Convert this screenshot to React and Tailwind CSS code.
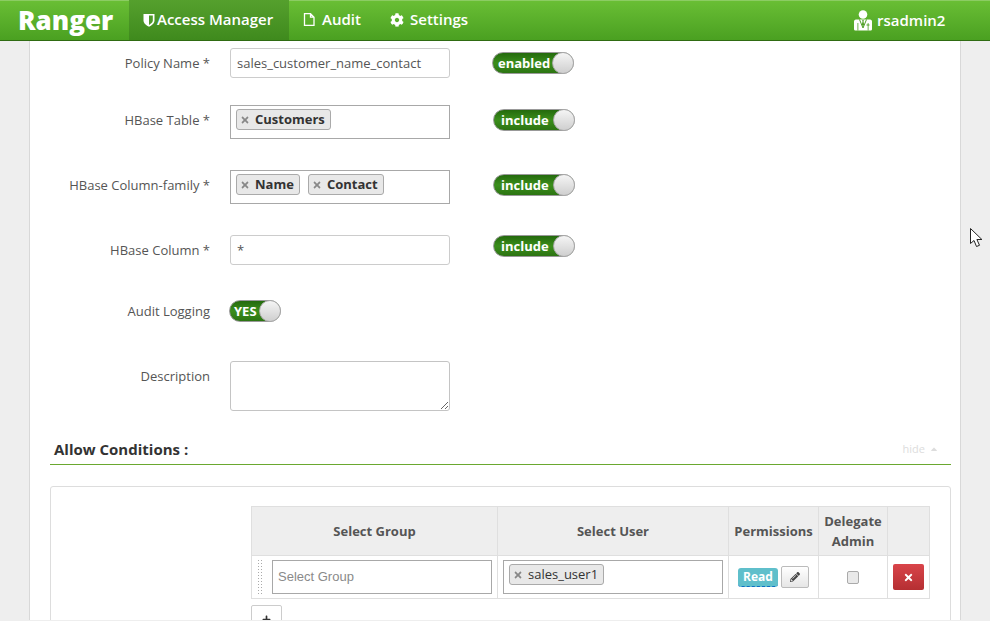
import React from "react";
import { FaCog, FaPencilAlt, FaTimes, FaPlus, FaCaretUp } from "react-icons/fa";

function Shield() {
  return (
    <svg width="12" height="14" viewBox="0 0 12 14" className="mr-[2px]">
      <path d="M0.500 1h11v6.500c0 3-3 5-5.500 6.200C3.500 12.500 0.500 10.500 0.500 7.500z" fill="#fff" />
      <path d="M6 2.600h3.800v5c0 2-2 3.400-3.800 4.400z" fill="#4d9a28" />
    </svg>
  );
}

function FileIcon() {
  return (
    <svg width="12" height="13" viewBox="0 0 12 13" className="mr-[7px]">
      <path d="M1.500 0.700h6l3.500 3.500v8.100h-9.500z M7.500 0.700v3.500h3.500" fill="none" stroke="#fff" strokeWidth="1.300" />
    </svg>
  );
}

function UserIcon() {
  return (
    <svg width="18" height="21" viewBox="0 0 18 21" className="mr-[5px]">
      <circle cx="9" cy="4.500" r="4.300" fill="#fff" />
      <path d="M2 9.500h14c1.300 0 2 1 2 2v7.500c0 1-.8 1.500-1.500 1.500h-15C.8 20.500 0 20 0 19v-7.500c0-1 .7-2 2-2z" fill="#fff" />
      <path d="M5.500 9.500 9 18l3.500-8.500" fill="none" stroke="#4f9f26" strokeWidth="1" />
      <path d="M8.200 10h1.600l-.3 1.500.6 3L9 16.500l-1.100-2 .6-3z" fill="#4f9f26" />
      <rect x="12.500" y="14.500" width="3" height="1" fill="#4f9f26" />
      <rect x="3.500" y="13" width="0.800" height="7.500" fill="#4f9f26" />
      <rect x="13.700" y="13" width="0.800" height="7.500" fill="#4f9f26" />
    </svg>
  );
}

function Toggle({ label, w, pl }) {
  return (
    <div className={`relative h-[22px] rounded-full border border-[#999] bg-gradient-to-b from-[#246a0d] via-[#3b8e1c] to-[#2c7412] flex items-center text-white font-bold text-[13px] leading-none ${w} ${pl}`}>
      <span>{label}</span>
      <span className="absolute right-[-1px] top-[-1px] w-[22px] h-[22px] rounded-full bg-gradient-to-b from-[#f5f5f5] to-[#cfcfcf] border border-[#aaa]" />
    </div>
  );
}

function Tag({ children, bold = true }) {
  return (
    <span className={`inline-flex items-center h-[21px] pl-[3px] pr-[5px] rounded-[3px] border border-[#aaa] bg-[#e8e8e8] text-[13px] text-[#333] mr-[8px] ${bold ? "font-bold" : ""}`}>
      <FaTimes className="text-[#888] text-[10px] mr-[5px]" />
      {children}
    </span>
  );
}

function Label({ children, pt = "pt-0" }) {
  return <div className={`w-[210px] shrink-0 text-right text-[13px] leading-[20px] text-[#555] ${pt}`}>{children}</div>;
}

function Row({ label, top, children, labelPt }) {
  return (
    <div className={`flex items-start ${top}`}>
      <Label pt={labelPt}>{label}</Label>
      <div className="ml-[20px] flex items-start">{children}</div>
    </div>
  );
}

function Select2({ children }) {
  return (
    <div className="w-[220px] h-[34px] border border-[#a8a8a8] bg-white pl-[5px] pt-[3px] flex items-start">{children}</div>
  );
}

const th = "border border-[#dfdfdf] bg-[#eeeeee] text-[13px] font-bold text-[#555] text-center leading-[20px] p-0";
const td = "border border-[#dfdfdf] p-0 align-middle";

export default function App() {
  return (
    <div className="h-[621px] w-[990px] overflow-hidden bg-[#eeeeee] font-['Open_Sans',sans-serif] flex flex-col pb-[1px]">
      <header className="h-[41px] shrink-0 flex items-stretch text-white border-b border-[#2f6b12] bg-gradient-to-b from-[#6abf35] to-[#4aa021] shadow-[inset_0_1px_0_#8ccc63]">
        <div className="w-[129px] shrink-0 pl-[18px] text-[26px] font-extrabold leading-[40px]">Ranger</div>
        <nav className="flex font-semibold items-stretch text-[15px]">
          <div className="w-[160px] flex items-center pl-[14px] pb-[1px] bg-gradient-to-b from-[#55a02d] to-[#3f8a1d]">
            <Shield />
            <span>Access Manager</span>
          </div>
          <div className="w-[87px] flex items-center pl-[14px] pb-[1px]">
            <FileIcon />
            <span>Audit</span>
          </div>
          <div className="flex items-center pl-[14px] pb-[1px]">
            <FaCog className="text-[14px] mr-[6px]" />
            <span>Settings</span>
          </div>
        </nav>
        <div className="ml-auto w-[136px] flex items-center text-[15px] font-semibold">
          <UserIcon />
          rsadmin2
        </div>
      </header>

      <main className="relative ml-[29px] w-[932px] flex-1 min-h-0 border-x border-[#d8d8d8] bg-white overflow-hidden">
        <div className="-ml-[30px] w-[990px]">
          <Row label="Policy Name *" top="mt-[7px]" labelPt="pt-[5px]">
            <div className="w-[220px] h-[30px] rounded-[3px] border border-[#cccccc] px-[6px] text-[13px] leading-[28px] text-[#555]">sales_customer_name_contact</div>
            <div className="ml-[42px] mt-[4px]"><Toggle label="enabled" w="w-[82px]" pl="pl-[5px]" /></div>
          </Row>
          <Row label="HBase Table *" top="mt-[27px]" labelPt="pt-[5px]">
            <Select2><Tag>Customers</Tag></Select2>
            <div className="ml-[43px] mt-[4px]"><Toggle label="include" w="w-[82px]" pl="pl-[7px]" /></div>
          </Row>
          <Row label="HBase Column-family *" top="mt-[31px]" labelPt="pt-[5px]">
            <Select2><Tag>Name</Tag><Tag>Contact</Tag></Select2>
            <div className="ml-[43px] mt-[4px]"><Toggle label="include" w="w-[82px]" pl="pl-[7px]" /></div>
          </Row>
          <Row label="HBase Column *" top="mt-[31px]" labelPt="pt-[5px]">
            <div className="w-[220px] h-[30px] rounded-[3px] border border-[#cccccc] px-[6px] text-[13px] leading-[28px] text-[#555]">*</div>
            <div className="ml-[43px]"><Toggle label="include" w="w-[82px]" pl="pl-[7px]" /></div>
          </Row>
          <Row label="Audit Logging" top="mt-[35px]" labelPt="pt-[1px]">
            <div className="-ml-[1px]"><Toggle label="YES" w="w-[52px]" pl="pl-[4px]" /></div>
          </Row>
          <Row label="Description" top="mt-[39px]" labelPt="pt-[5px]">
            <textarea className="block w-[220px] h-[50px] rounded-[3px] border border-[#c4c4c4] bg-white outline-none" readOnly />
          </Row>

          <div className="ml-[50px] w-[901px] mt-[26px] h-[28px] border-b border-[#6aa82f] flex items-start justify-between">
            <div className="pl-[4px] text-[15px] font-bold leading-[24px] text-[#333]">Allow Conditions :</div>
            <div className="pr-[12px] text-[11px] leading-[24px] text-[#dddddd] flex items-center">hide<FaCaretUp className="ml-[4px] text-[10px]" /></div>
          </div>

          <section className="ml-[50px] w-[901px] mt-[21px] border border-[#dddddd] rounded-[3px] pt-[19px] pl-[200px] h-[200px]">
            <table className="border-collapse table-fixed w-[678px]">
              <colgroup>
                <col className="w-[246px]" />
                <col className="w-[231px]" />
                <col className="w-[90px]" />
                <col className="w-[69px]" />
                <col className="w-[42px]" />
              </colgroup>
              <thead>
                <tr className="h-[49px]">
                  <th className={th}>Select Group</th>
                  <th className={th}>Select User</th>
                  <th className={th}>Permissions</th>
                  <th className={th}>Delegate<br />Admin</th>
                  <th className={th}></th>
                </tr>
              </thead>
              <tbody>
                <tr className="h-[43px]">
                  <td className={td}>
                    <div className="flex items-center pl-[5px]">
                      <div className="w-[6px] h-[36px] mr-[9px] bg-[radial-gradient(#aaaaaa_1px,transparent_1px)] bg-[length:3px_3px]" />
                      <div className="w-[220px] h-[34px] border border-[#a8a8a8] pl-[5px] text-[13px] leading-[32px] text-[#8a8a8a] font-['Liberation_Sans',sans-serif]">Select Group</div>
                    </div>
                  </td>
                  <td className={td}>
                    <div className="pl-[5px]">
                      <div className="w-[220px] h-[34px] border border-[#a8a8a8] pl-[5px] pt-[3px] flex items-start">
                        <Tag bold={false}>sales_user1</Tag>
                      </div>
                    </div>
                  </td>
                  <td className={td}>
                    <div className="flex items-center pl-[9px]">
                      <span className="w-[40px] h-[19px] rounded-[3px] bg-[#5fbfcb] border-b border-dashed border-[#0f6fc6] text-white font-bold text-[12px] leading-[18px] text-center">Read</span>
                      <span className="ml-[3px] w-[28px] h-[22px] rounded-[2px] border border-[#bbbbbb] bg-gradient-to-b from-white to-[#e6e6e6] flex items-center justify-center">
                        <FaPencilAlt className="text-[10px] text-[#444]" />
                      </span>
                    </div>
                  </td>
                  <td className={td}>
                    <div className="flex justify-center">
                      <span className="w-[12px] h-[13px] rounded-[2px] border border-[#aaaaaa] bg-[#e9e9e9]" />
                    </div>
                  </td>
                  <td className={td}>
                    <div className="flex justify-center">
                      <span className="w-[31px] h-[26px] rounded-[2px] bg-gradient-to-b from-[#d9444a] to-[#b52f32] flex items-center justify-center">
                        <FaTimes className="text-white text-[11px]" />
                      </span>
                    </div>
                  </td>
                </tr>
              </tbody>
            </table>
            <div className="mt-[6px] w-[31px] h-[30px] rounded-[2px] border border-[#cccccc] bg-white flex justify-center pt-[9px]">
              <FaPlus className="text-[9px] text-[#333]" />
            </div>
          </section>
        </div>
      </main>

      <svg width="14" height="21" viewBox="0 0 14 21" className="absolute left-[970px] top-[228px]">
        <path d="M0.500 0.500v15l3.500-3 2.500 6 3-1.200-2.600-5.800h5z" fill="#fff" stroke="#222" strokeWidth="1" />
      </svg>
    </div>
  );
}
